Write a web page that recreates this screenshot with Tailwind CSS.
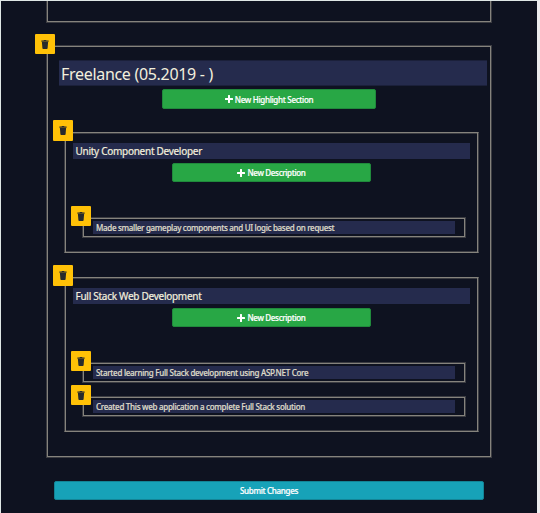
<!DOCTYPE html>
<html lang="en">
<head>
<meta charset="utf-8">
<title>Edit experience</title>
<script src="https://cdn.jsdelivr.net/npm/@tailwindcss/browser@4"></script>
</head>
<body class="overflow-hidden bg-[#0e1220]">
<svg class="hidden">
  <symbol id="trash" viewBox="0 0 8 9"><path d="M.4.5h2.1L3 0h2l.5.5h2.1v1.2H.4zM.9 2.1h6.2L6.6 8.3q-.1.7-.8.7H2.2q-.7 0-.8-.7z"/></symbol>
  <symbol id="plus" viewBox="0 0 8 8"><path d="M3 .5q0-.5.5-.5h1q.5 0 .5.5V3h2.500q.5 0 .5.5v1q0 .5-.5.5H5v2.500q0 .5-.5.5h-1q-.5 0-.5-.5V5H.5Q0 5 0 4.500v-1Q0 3 .5 3H3z"/></symbol>
</svg>
<main class="flex h-[513px] w-[540px] flex-col overflow-hidden border-t border-r-3 border-l border-t-[#dfe7e6] border-r-[#ececee] border-l-[#dfe7e6] bg-[#0e1220] font-['Noto_Sans','Open_Sans',sans-serif] text-[#f3efdd]">
  <section class="ml-[45px] h-[22px] w-[446px] shrink-0 border-x border-b border-[#3b3c42] shadow-[inset_1px_0_#85837d,inset_-1px_0_#85837d,inset_0_-1px_#85837d]"></section>

  <section class="relative mt-[22px] ml-[45px] h-[413px] w-[446px] shrink-0 border border-[#3b3c42] shadow-[inset_0_0_0_1px_#85837d]">
    <button class="absolute -top-3 -left-3 flex size-5 items-center justify-center rounded-[1px] bg-[#ffc107]"><svg class="h-[9px] w-2 fill-[#272a2c]"><use href="#trash"/></svg></button>
    <div class="mt-[14px] ml-3 flex h-[26px] w-[428px] items-center border-y border-[#1b203a] bg-[#252b4d] pl-[2px] text-[16px] whitespace-nowrap"><span class="relative top-[1px] tracking-[-0.31px]">Freelance (05.2019 - )</span></div>
    <button class="mt-[3px] ml-[115px] flex h-5 w-[214px] items-center justify-center gap-[2px] rounded-[2px] border border-[#208a3c] bg-[#28a745] text-[8px] font-medium whitespace-nowrap text-white"><svg class="size-2 fill-white"><use href="#plus"/></svg><span class="relative top-[1px] tracking-[-0.3px] [-webkit-text-stroke:0.2px]">New Highlight Section</span></button>

    <article class="relative mt-[23px] ml-[17px] h-[121px] w-[415px] border border-x-[#3b3c42] border-y-[#85837d] shadow-[inset_1px_0_#85837d,inset_-1px_0_#85837d,inset_0_1px_#3b3c42,inset_0_-1px_#3b3c42]">
      <button class="absolute top-[-13px] -left-3 flex h-[21px] w-5 items-center justify-center rounded-[1px] bg-[#ffc107]"><svg class="h-[9px] w-2 fill-[#272a2c]"><use href="#trash"/></svg></button>
      <div class="mt-[10px] ml-2 flex h-4 w-[397px] items-center bg-[#252b4d] pl-[2.500px] text-[10px] whitespace-nowrap"><span class="tracking-[-0.28px] [-webkit-text-stroke:0.2px]">Unity Component Developer</span></div>
      <button class="mt-1 ml-[107px] flex h-[19px] w-[199px] items-center justify-center gap-[2px] rounded-[2px] border border-[#208a3c] bg-[#28a745] text-[8px] font-medium whitespace-nowrap text-white"><svg class="size-2 fill-white"><use href="#plus"/></svg><span class="tracking-[-0.33px] [-webkit-text-stroke:0.2px]">New Description</span></button>
      <div class="relative mt-[35px] ml-[17px] h-[21px] w-[384px] border border-[#3b3c42] shadow-[inset_0_0_0_1px_#85837d]">
        <button class="absolute -top-3 -left-3 flex size-5 items-center justify-center rounded-[1px] bg-[#ffc107]"><svg class="h-[9px] w-2 fill-[#272a2c]"><use href="#trash"/></svg></button>
        <div class="mt-[3px] ml-[10px] flex h-[13px] w-[362px] items-center bg-[#252b4d] pl-[3px] text-[8px] font-medium whitespace-nowrap text-[#dedac8]"><span class="tracking-[-0.31px] [-webkit-text-stroke:0.2px]">Made smaller gameplay components and UI logic based on request</span></div>
      </div>
    </article>

    <article class="relative mt-6 ml-[17px] h-[155px] w-[415px] border border-x-[#3b3c42] border-y-[#85837d] shadow-[inset_1px_0_#85837d,inset_-1px_0_#85837d,inset_0_1px_#3b3c42,inset_0_-1px_#3b3c42]">
      <button class="absolute top-[-13px] -left-3 flex h-[21px] w-5 items-center justify-center rounded-[1px] bg-[#ffc107]"><svg class="h-[9px] w-2 fill-[#272a2c]"><use href="#trash"/></svg></button>
      <div class="mt-[10px] ml-2 flex h-4 w-[397px] items-center bg-[#252b4d] pl-[2.500px] text-[10px] whitespace-nowrap"><span class="tracking-[-0.27px] [-webkit-text-stroke:0.2px]">Full Stack Web Development</span></div>
      <button class="mt-1 ml-[107px] flex h-[19px] w-[199px] items-center justify-center gap-[2px] rounded-[2px] border border-[#208a3c] bg-[#28a745] text-[8px] font-medium whitespace-nowrap text-white"><svg class="size-2 fill-white"><use href="#plus"/></svg><span class="tracking-[-0.33px] [-webkit-text-stroke:0.2px]">New Description</span></button>
      <div class="relative mt-[35px] ml-[17px] h-[21px] w-[384px] border border-[#3b3c42] shadow-[inset_0_0_0_1px_#85837d]">
        <button class="absolute -top-3 -left-3 flex size-5 items-center justify-center rounded-[1px] bg-[#ffc107]"><svg class="h-[9px] w-2 fill-[#272a2c]"><use href="#trash"/></svg></button>
        <div class="mt-[3px] ml-[10px] flex h-[13px] w-[362px] items-center bg-[#252b4d] pl-[3px] text-[8px] font-medium whitespace-nowrap text-[#dedac8]"><span class="tracking-[-0.28px] [-webkit-text-stroke:0.2px]">Started learning Full Stack development using ASP.NET Core</span></div>
      </div>
      <div class="relative mt-[13px] ml-[17px] h-[21px] w-[384px] border border-[#3b3c42] shadow-[inset_0_0_0_1px_#85837d]">
        <button class="absolute -top-3 -left-3 flex size-5 items-center justify-center rounded-[1px] bg-[#ffc107]"><svg class="h-[9px] w-2 fill-[#272a2c]"><use href="#trash"/></svg></button>
        <div class="mt-[3px] ml-[10px] flex h-[13px] w-[362px] items-center bg-[#252b4d] pl-[3px] text-[8px] font-medium whitespace-nowrap text-[#dedac8]"><span class="tracking-[-0.29px] [-webkit-text-stroke:0.2px]">Created This web application a complete Full Stack solution</span></div>
      </div>
    </article>
  </section>

  <button class="mt-[23px] ml-[53px] flex h-[19px] w-[430px] shrink-0 items-center justify-center rounded-[2px] border border-[#138496] bg-[#17a2b8] text-[8px] font-medium whitespace-nowrap text-white"><span class="tracking-[-0.3px] [-webkit-text-stroke:0.2px]">Submit Changes</span></button>
</main>
</body>
</html>
